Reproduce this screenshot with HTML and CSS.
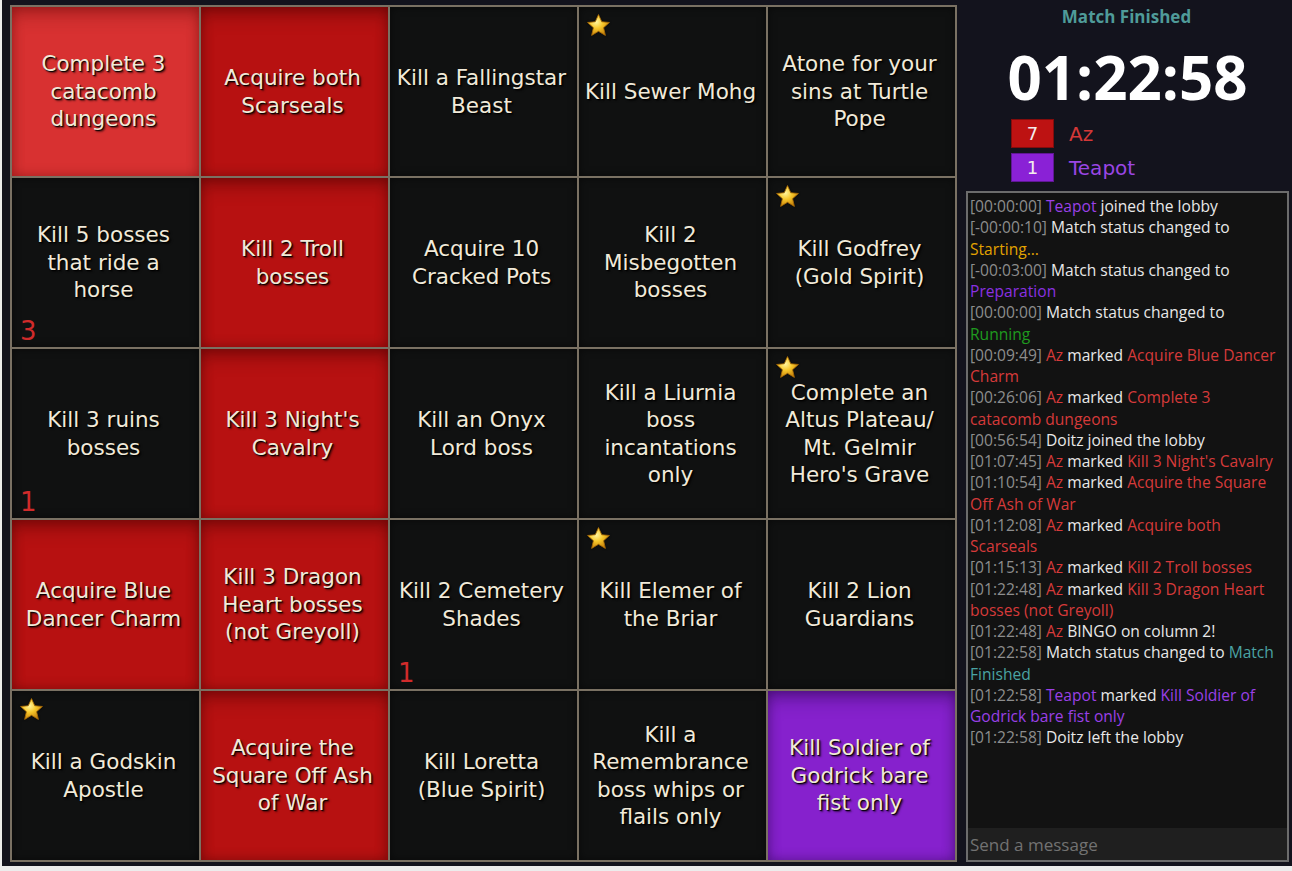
FILE: index.html
```html
<!DOCTYPE html>
<html>
<head>
<meta charset="utf-8">
<link rel="stylesheet" href="styles.css">
</head>
<body>
<div class="app">
  <div class="board-wrap">
    <div class="board">
      <div class="cell hot"><span class="label">Complete 3 catacomb dungeons</span></div>
      <div class="cell red"><span class="label">Acquire both Scarseals</span></div>
      <div class="cell"><span class="label">Kill a Fallingstar Beast</span></div>
      <div class="cell"><svg class="star" viewBox="0 0 24 24"><use href="#star"/></svg><span class="label">Kill Sewer Mohg</span></div>
      <div class="cell"><span class="label">Atone for your sins at Turtle Pope</span></div>

      <div class="cell"><span class="label">Kill 5 bosses that ride a horse</span><span class="count">3</span></div>
      <div class="cell red"><span class="label">Kill 2 Troll bosses</span></div>
      <div class="cell"><span class="label">Acquire 10 Cracked Pots</span></div>
      <div class="cell"><span class="label">Kill 2 Misbegotten bosses</span></div>
      <div class="cell"><svg class="star" viewBox="0 0 24 24"><use href="#star"/></svg><span class="label">Kill Godfrey (Gold Spirit)</span></div>

      <div class="cell"><span class="label">Kill 3 ruins bosses</span><span class="count">1</span></div>
      <div class="cell red"><span class="label">Kill 3 Night's Cavalry</span></div>
      <div class="cell"><span class="label">Kill an Onyx Lord boss</span></div>
      <div class="cell"><span class="label">Kill a Liurnia boss incantations only</span></div>
      <div class="cell"><svg class="star" viewBox="0 0 24 24"><use href="#star"/></svg><span class="label">Complete an Altus Plateau/<wbr>Mt. Gelmir Hero's Grave</span></div>

      <div class="cell red"><span class="label">Acquire Blue Dancer Charm</span></div>
      <div class="cell red"><span class="label">Kill 3 Dragon Heart bosses (not Greyoll)</span></div>
      <div class="cell"><span class="label">Kill 2 Cemetery Shades</span><span class="count">1</span></div>
      <div class="cell"><svg class="star" viewBox="0 0 24 24"><use href="#star"/></svg><span class="label">Kill Elemer of the Briar</span></div>
      <div class="cell"><span class="label">Kill 2 Lion Guardians</span></div>

      <div class="cell"><svg class="star" viewBox="0 0 24 24"><use href="#star"/></svg><span class="label">Kill a Godskin Apostle</span></div>
      <div class="cell red"><span class="label">Acquire the Square Off Ash of War</span></div>
      <div class="cell"><span class="label">Kill Loretta (Blue Spirit)</span></div>
      <div class="cell"><span class="label">Kill a Remembrance boss whips or flails only</span></div>
      <div class="cell purple"><span class="label">Kill Soldier of Godrick bare fist only</span></div>
    </div>
  </div>

  <div class="side">
    <div class="status">Match Finished</div>
    <div class="timer">01:22:58</div>
    <div class="scores">
      <div class="score"><span class="box box-red">7</span><span class="name name-red">Az</span></div>
      <div class="score"><span class="box box-purple">1</span><span class="name name-purple">Teapot</span></div>
    </div>
    <div class="chat">
      <div class="log">
        <div class="msg"><span class="ts">[00:00:00]</span> <span class="c-purple">Teapot</span> joined the lobby</div>
        <div class="msg"><span class="ts">[-00:00:10]</span> Match status changed to <span class="c-orange">Starting...</span></div>
        <div class="msg"><span class="ts">[-00:03:00]</span> Match status changed to <span class="c-violet">Preparation</span></div>
        <div class="msg"><span class="ts">[00:00:00]</span> Match status changed to <span class="c-green">Running</span></div>
        <div class="msg"><span class="ts">[00:09:49]</span> <span class="c-red">Az</span> marked <span class="c-red">Acquire Blue Dancer Charm</span></div>
        <div class="msg"><span class="ts">[00:26:06]</span> <span class="c-red">Az</span> marked <span class="c-red">Complete 3 catacomb dungeons</span></div>
        <div class="msg"><span class="ts">[00:56:54]</span> Doitz joined the lobby</div>
        <div class="msg"><span class="ts">[01:07:45]</span> <span class="c-red">Az</span> marked <span class="c-red">Kill 3 Night's Cavalry</span></div>
        <div class="msg"><span class="ts">[01:10:54]</span> <span class="c-red">Az</span> marked <span class="c-red">Acquire the Square Off Ash of War</span></div>
        <div class="msg"><span class="ts">[01:12:08]</span> <span class="c-red">Az</span> marked <span class="c-red">Acquire both Scarseals</span></div>
        <div class="msg"><span class="ts">[01:15:13]</span> <span class="c-red">Az</span> marked <span class="c-red">Kill 2 Troll bosses</span></div>
        <div class="msg"><span class="ts">[01:22:48]</span> <span class="c-red">Az</span> marked <span class="c-red">Kill 3 Dragon Heart bosses (not Greyoll)</span></div>
        <div class="msg"><span class="ts">[01:22:48]</span> <span class="c-red">Az</span> BINGO on column 2!</div>
        <div class="msg"><span class="ts">[01:22:58]</span> Match status changed to <span class="c-teal">Match Finished</span></div>
        <div class="msg"><span class="ts">[01:22:58]</span> <span class="c-purple">Teapot</span> marked <span class="c-purple">Kill Soldier of Godrick bare fist only</span></div>
        <div class="msg"><span class="ts">[01:22:58]</span> Doitz left the lobby</div>
      </div>
      <input class="input" type="text" placeholder="Send a message">
    </div>
  </div>
</div>

<svg width="0" height="0" style="position:absolute">
  <defs>
    <radialGradient id="gold" cx="40%" cy="35%" r="70%">
      <stop offset="0" stop-color="#fff6a0"/>
      <stop offset="0.45" stop-color="#f7c72a"/>
      <stop offset="1" stop-color="#c07a08"/>
    </radialGradient>
    <symbol id="star" viewBox="0 0 24 24">
      <path d="M12 1.5l3.1 6.9 7.4.7-5.6 5 1.7 7.4L12 17.6l-6.6 3.9 1.7-7.4-5.6-5 7.4-.7z" fill="url(#gold)" stroke="#a86a06" stroke-width="0.8" stroke-linejoin="round"/>
    </symbol>
  </defs>
</svg>
</body>
</html>
```

FILE: styles.css
```css
html, body {
  margin: 0;
  padding: 0;
}
body {
  background: #ececec;
  width: 1292px;
  height: 871px;
  overflow: hidden;
}
.app {
  display: flex;
  margin-left: 2px;
  height: 866px;
  background: #13131d;
}
.board-wrap {
  padding: 5px 0 0 8px;
}
.board {
  display: grid;
  grid-template-columns: repeat(5, 187px);
  grid-template-rows: repeat(5, 169px);
  gap: 2px;
  padding: 2px;
  background: #7a7163;
}
.cell {
  position: relative;
  display: flex;
  align-items: center;
  justify-content: center;
  text-align: center;
  padding: 0 8px 0 4px;
  background: #101111;
  box-shadow: inset 0 0 8px rgba(0, 0, 0, 0.5);
  font-family: "DejaVu Sans", sans-serif;
  font-size: 21.5px;
  line-height: 27.5px;
  color: #f1ead9;
  text-shadow: 1px 1px 1px #000, 2px 2px 2px rgba(0, 0, 0, 0.55);
}
.cell.red {
  background: #b71111;
  box-shadow: inset 0 14px 18px -6px rgba(60, 0, 0, 0.35), inset 0 0 12px rgba(60, 0, 0, 0.45);
}
.cell.hot {
  background: #d83131;
  box-shadow: inset 0 14px 18px -6px rgba(80, 0, 0, 0.3), inset 0 0 12px rgba(80, 0, 0, 0.4);
}
.cell.purple {
  background: #8621cd;
  box-shadow: inset 0 14px 18px -6px rgba(30, 0, 60, 0.35), inset 0 0 12px rgba(30, 0, 60, 0.45);
}
.star {
  position: absolute;
  top: 6px;
  left: 7px;
  width: 25px;
  height: 25px;
  filter: drop-shadow(0 0 1px rgba(0, 0, 0, 0.6));
}
.count {
  position: absolute;
  left: 8px;
  bottom: 1px;
  font-size: 26px;
  line-height: 30px;
  color: #d12b2b;
  text-shadow: none;
}
.side {
  flex: 1;
  display: flex;
  flex-direction: column;
  font-family: "Open Sans", sans-serif;
}
.status {
  text-align: center;
  color: #4f9b99;
  font-weight: 700;
  font-size: 17px;
  line-height: 22px;
  margin-top: 6px;
  padding-left: 4px;
}
.timer {
  text-align: center;
  color: #ffffff;
  font-weight: 700;
  font-size: 60px;
  line-height: 70px;
  margin-top: 14px;
  padding-left: 6px;
}
.scores {
  display: flex;
  flex-direction: column;
  gap: 5px;
  padding-left: 54px;
  margin-top: 7px;
}
.score {
  display: flex;
  align-items: center;
  gap: 15px;
}
.box {
  width: 41px;
  height: 27px;
  border: 1px solid rgba(0, 0, 0, 0.3);
  display: flex;
  align-items: center;
  justify-content: center;
  color: #f4ecec;
  font-size: 18px;
  font-family: "DejaVu Sans", sans-serif;
}
.box-red { background: #bd1212; }
.box-purple { background: #8a21d6; }
.name {
  font-family: "DejaVu Sans", sans-serif;
  font-size: 20px;
}
.name-red { color: #d43838; }
.name-purple { color: #9a46e4; }
.chat {
  margin: 9px 3px 4px 9px;
  flex: 1;
  display: flex;
  flex-direction: column;
  border: 2px solid #6c6c6c;
  background: #121212;
}
.log {
  flex: 1;
  padding: 3px 10px 0 2px;
  font-size: 15.6px;
  line-height: 21.25px;
  color: #e8e8e8;
}
.ts { color: #8d8d8d; }
.c-red { color: #d63a3a; }
.c-purple { color: #9a40e6; }
.c-violet { color: #8a30e0; }
.c-orange { color: #e3a300; }
.c-green { color: #1f9a1f; }
.c-teal { color: #4aa3a3; }
.input {
  height: 32px;
  border: none;
  outline: none;
  background: #1f1f1f;
  padding: 0 2px;
  margin: 0;
  font-family: "Open Sans", sans-serif;
  font-size: 17px;
  color: #ddd;
}
.input::placeholder {
  color: #727272;
}
```
